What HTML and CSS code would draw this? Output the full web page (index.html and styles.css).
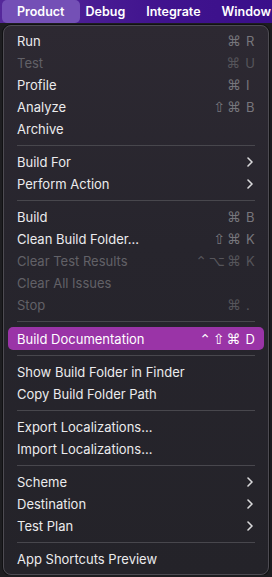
FILE: index.html
```html
<!DOCTYPE html>
<html lang="en">
<head>
    <meta charset="UTF-8">
    <meta name="viewport" content="width=device-width, initial-scale=1.0">
    <title>Product Menu</title>
    <link rel="stylesheet" href="styles.css">
</head>
<body>
    <div class="menubar">
        <span class="bar-item active">Product</span>
        <span class="bar-item">Debug</span>
        <span class="bar-item">Integrate</span>
        <span class="bar-item">Window</span>
    </div>

    <ul class="menu">
        <li class="item"><span>Run</span><span class="keys">⌘<b>R</b></span></li>
        <li class="item disabled"><span>Test</span><span class="keys">⌘<b>U</b></span></li>
        <li class="item"><span>Profile</span><span class="keys">⌘<b>I</b></span></li>
        <li class="item"><span>Analyze</span><span class="keys">⇧⌘<b>B</b></span></li>
        <li class="item"><span>Archive</span></li>
        <li class="sep"></li>
        <li class="item"><span>Build For</span><svg class="chev" viewBox="0 0 6 10"><path d="M1 1l4 4-4 4"/></svg></li>
        <li class="item"><span>Perform Action</span><svg class="chev" viewBox="0 0 6 10"><path d="M1 1l4 4-4 4"/></svg></li>
        <li class="sep"></li>
        <li class="item"><span>Build</span><span class="keys">⌘<b>B</b></span></li>
        <li class="item"><span>Clean Build Folder...</span><span class="keys">⇧⌘<b>K</b></span></li>
        <li class="item disabled"><span>Clear Test Results</span><span class="keys">⌃⌥⌘<b>K</b></span></li>
        <li class="item disabled"><span>Clear All Issues</span></li>
        <li class="item disabled"><span>Stop</span><span class="keys">⌘<b>.</b></span></li>
        <li class="sep"></li>
        <li class="item selected"><span>Build Documentation</span><span class="keys">⌃⇧⌘<b>D</b></span></li>
        <li class="sep"></li>
        <li class="item"><span>Show Build Folder in Finder</span></li>
        <li class="item"><span>Copy Build Folder Path</span></li>
        <li class="sep"></li>
        <li class="item"><span>Export Localizations...</span></li>
        <li class="item"><span>Import Localizations...</span></li>
        <li class="sep"></li>
        <li class="item"><span>Scheme</span><svg class="chev" viewBox="0 0 6 10"><path d="M1 1l4 4-4 4"/></svg></li>
        <li class="item"><span>Destination</span><svg class="chev" viewBox="0 0 6 10"><path d="M1 1l4 4-4 4"/></svg></li>
        <li class="item"><span>Test Plan</span><svg class="chev" viewBox="0 0 6 10"><path d="M1 1l4 4-4 4"/></svg></li>
        <li class="sep"></li>
        <li class="item"><span>App Shortcuts Preview</span></li>
    </ul>
</body>
</html>
```

FILE: styles.css
```css
body {
    margin: 0;
    background-color: #1d1d20;
    font-family: Inter, Roboto, "Liberation Sans", sans-serif;
    font-size: 13px;
    color: #ebebed;
}
.menubar {
    display: flex;
    height: 23px;
    align-items: center;
    padding-left: 2px;
    background: linear-gradient(90deg, #55289a, #40138e 60%, #3a0f8a);
    white-space: nowrap;
    overflow: hidden;
}
.bar-item {
    font-weight: 600;
    font-size: 12.5px;
    color: #ffffff;
    padding: 0 10.5px;
    line-height: 23px;
}
.bar-item.active {
    background-color: #7450b6;
    border-radius: 5px;
    padding: 0 15px;
    margin-right: -4.5px;
}
.menu {
    list-style: none;
    margin: 2px 3px 0;
    padding: 4px 0;
    border: 1px solid #4d4b52;
    border-radius: 8px;
    background: linear-gradient(180deg, #2d2932, #27252d 40%, #242329);
    box-shadow: 0 0 0 1px #111113;
}
.item {
    display: flex;
    justify-content: space-between;
    align-items: center;
    height: 22px;
    padding: 0 13px;
    white-space: nowrap;
}
.item.disabled {
    color: #626167;
}
.keys {
    font-family: "DejaVu Sans", sans-serif;
    font-size: 14px;
    color: #77767c;
    letter-spacing: 2px;
}
.keys b {
    display: inline-block;
    min-width: 9px;
    margin-left: 3px;
    font-family: Inter, sans-serif;
    font-size: 13px;
    font-weight: 400;
    letter-spacing: 0;
}
.item.disabled .keys {
    color: #56555b;
}
.item.selected {
    margin: 0 4px;
    padding: 0 9px;
    height: 23px;
    background-color: #9a34a7;
    border-radius: 5px;
    color: #ffffff;
}
.item.selected .keys {
    color: #ffffff;
}
.chev {
    width: 6px;
    height: 10px;
    margin-right: 2px;
    fill: none;
    stroke: #d8d8da;
    stroke-width: 1.6;
    stroke-linecap: round;
    stroke-linejoin: round;
}
.sep {
    height: 1px;
    margin: 5px 13px;
    background-color: #48474d;
}
```
